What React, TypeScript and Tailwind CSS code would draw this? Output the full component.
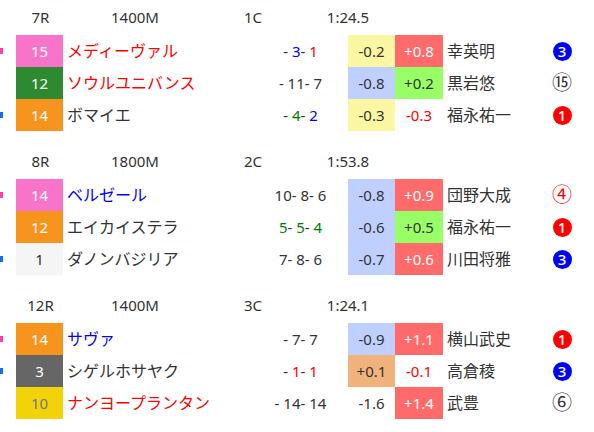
import React from "react";

type Pos = { v: string; c: string };
type Cell = { text: string; cls: string };
type Row = {
  mark?: string;
  num: string;
  numCls: string;
  name: string;
  nameCls: string;
  pos: Pos[];
  d1: Cell;
  d2: Cell;
  jockey: string;
  badge: { n: string; kind: "fill" | "ring"; cls: string };
};
type Race = { race: string; dist: string; cls: string; time: string; rows: Row[] };

const K = "text-[#333]";
const BLUE = "text-[#0000ff]";
const RED = "text-[#ff0000]";
const GREEN = "text-[#008000]";

const YEL = "bg-[#faf6a2] text-[#333]";
const LBLUE = "bg-[#bfcfff] text-[#333]";
const PLUS = "bg-[#ff6b6b] text-white";
const LGREEN = "bg-[#99ff66] text-[#333]";
const TAN = "bg-[#f0b27a] text-[#333]";
const NONE_R = "text-[#ff0000]";
const NONE_K = "text-[#333]";

const races: Race[] = [
  {
    race: "7R",
    dist: "1400M",
    cls: "1C",
    time: "1:24.5",
    rows: [
      {
        mark: "bg-[#ff3fa8]",
        num: "15",
        numCls: "bg-[#f874c9] text-white",
        name: "メディーヴァル",
        nameCls: RED,
        pos: [{ v: "", c: K }, { v: "3", c: BLUE }, { v: "1", c: RED }],
        d1: { text: "-0.2", cls: YEL },
        d2: { text: "+0.8", cls: PLUS },
        jockey: "幸英明",
        badge: { n: "3", kind: "fill", cls: "bg-[#0000ff]" },
      },
      {
        num: "12",
        numCls: "bg-[#2e8a30] text-white",
        name: "ソウルユニバンス",
        nameCls: RED,
        pos: [{ v: "", c: K }, { v: "11", c: K }, { v: "7", c: K }],
        d1: { text: "-0.8", cls: LBLUE },
        d2: { text: "+0.2", cls: LGREEN },
        jockey: "黒岩悠",
        badge: { n: "⑮", kind: "ring", cls: "text-[#333]" },
      },
      {
        mark: "bg-[#1a6bff]",
        num: "14",
        numCls: "bg-[#f7941e] text-white",
        name: "ボマイエ",
        nameCls: K,
        pos: [{ v: "", c: K }, { v: "4", c: GREEN }, { v: "2", c: BLUE }],
        d1: { text: "-0.3", cls: YEL },
        d2: { text: "-0.3", cls: NONE_R },
        jockey: "福永祐一",
        badge: { n: "1", kind: "fill", cls: "bg-[#ff0000]" },
      },
    ],
  },
  {
    race: "8R",
    dist: "1800M",
    cls: "2C",
    time: "1:53.8",
    rows: [
      {
        mark: "bg-[#ff3fa8]",
        num: "14",
        numCls: "bg-[#f874c9] text-white",
        name: "ベルゼール",
        nameCls: BLUE,
        pos: [{ v: "10", c: K }, { v: "8", c: K }, { v: "6", c: K }],
        d1: { text: "-0.8", cls: LBLUE },
        d2: { text: "+0.9", cls: PLUS },
        jockey: "団野大成",
        badge: { n: "④", kind: "ring", cls: "text-[#ff0000]" },
      },
      {
        num: "12",
        numCls: "bg-[#f7941e] text-white",
        name: "エイカイステラ",
        nameCls: K,
        pos: [{ v: "5", c: GREEN }, { v: "5", c: GREEN }, { v: "4", c: GREEN }],
        d1: { text: "-0.6", cls: LBLUE },
        d2: { text: "+0.5", cls: LGREEN },
        jockey: "福永祐一",
        badge: { n: "1", kind: "fill", cls: "bg-[#ff0000]" },
      },
      {
        mark: "bg-[#1a6bff]",
        num: "1",
        numCls: "bg-[#f5f5f5] text-[#333]",
        name: "ダノンバジリア",
        nameCls: K,
        pos: [{ v: "7", c: K }, { v: "8", c: K }, { v: "6", c: K }],
        d1: { text: "-0.7", cls: LBLUE },
        d2: { text: "+0.6", cls: PLUS },
        jockey: "川田将雅",
        badge: { n: "3", kind: "fill", cls: "bg-[#0000ff]" },
      },
    ],
  },
  {
    race: "12R",
    dist: "1400M",
    cls: "3C",
    time: "1:24.1",
    rows: [
      {
        mark: "bg-[#ff3fa8]",
        num: "14",
        numCls: "bg-[#f7941e] text-white",
        name: "サヴァ",
        nameCls: BLUE,
        pos: [{ v: "", c: K }, { v: "7", c: K }, { v: "7", c: K }],
        d1: { text: "-0.9", cls: LBLUE },
        d2: { text: "+1.1", cls: PLUS },
        jockey: "横山武史",
        badge: { n: "1", kind: "fill", cls: "bg-[#ff0000]" },
      },
      {
        mark: "bg-[#1a6bff]",
        num: "3",
        numCls: "bg-[#666666] text-white",
        name: "シゲルホサヤク",
        nameCls: K,
        pos: [{ v: "", c: K }, { v: "1", c: RED }, { v: "1", c: RED }],
        d1: { text: "+0.1", cls: TAN },
        d2: { text: "-0.1", cls: NONE_R },
        jockey: "高倉稜",
        badge: { n: "3", kind: "fill", cls: "bg-[#0000ff]" },
      },
      {
        num: "10",
        numCls: "bg-[#f2d30a] text-[#777]",
        name: "ナンヨープランタン",
        nameCls: RED,
        pos: [{ v: "", c: K }, { v: "14", c: K }, { v: "14", c: K }],
        d1: { text: "-1.6", cls: NONE_K },
        d2: { text: "+1.4", cls: PLUS },
        jockey: "武豊",
        badge: { n: "⑥", kind: "ring", cls: "text-[#333]" },
      },
    ],
  },
];

function Badge({ b }: { b: Row["badge"] }) {
  if (b.kind === "fill") {
    return (
      <div
        className={`flex h-[19px] w-[19px] items-center justify-center rounded-full text-[15px] font-medium leading-none text-white ${b.cls}`}
      >
        {b.n}
      </div>
    );
  }
  return <span className={`text-[20px] leading-none ${b.cls}`}>{b.n}</span>;
}

function RaceRow({ row }: { row: Row }) {
  return (
    <div className="flex h-[32px] items-stretch">
      {/* clipped marker */}
      <div className="flex w-[16px] items-center">
        {row.mark && <div className={`h-[6px] w-[3px] ${row.mark}`} />}
      </div>
      <div
        className={`flex w-[47px] items-center justify-center text-[15px] ${row.numCls}`}
      >
        {row.num}
      </div>
      <div className={`flex w-[190px] items-center pl-[4px] text-[16px] ${row.nameCls}`}>
        {row.name}
      </div>
      <div className="flex w-[95px] items-center justify-center whitespace-pre text-[15px] text-[#333]">
        <span className={row.pos[0].c}>{row.pos[0].v}</span>
        {"- "}
        <span className={row.pos[1].c}>{row.pos[1].v}</span>
        {"- "}
        <span className={row.pos[2].c}>{row.pos[2].v}</span>
      </div>
      <div className={`flex w-[47px] items-center justify-center text-[15px] ${row.d1.cls}`}>
        {row.d1.text}
      </div>
      <div className={`flex w-[48px] items-center justify-center text-[15px] ${row.d2.cls}`}>
        {row.d2.text}
      </div>
      <div className="flex w-[100px] items-center pl-[4px] text-[16px] text-[#333]">
        {row.jockey}
      </div>
      <div className="flex w-[38px] items-center justify-center">
        <Badge b={row.badge} />
      </div>
    </div>
  );
}

export default function App() {
  return (
    <div
      className="h-[432px] w-[594px] overflow-hidden bg-white text-[#333]"
      style={{ fontFamily: '"Noto Sans", "Noto Sans CJK JP", sans-serif' }}
    >
      {races.map((r) => (
        <div key={r.race} className="mb-[13px]">
          {/* Header */}
          <div className="flex h-[35px] items-center text-[15px]">
            <div className="w-[16px]" />
            <div className="w-[49px] text-center">{r.race}</div>
            <div className="w-[140px] text-center">{r.dist}</div>
            <div className="w-[96px] text-center">{r.cls}</div>
            <div className="w-[94px] text-center">{r.time}</div>
          </div>
          {r.rows.map((row, i) => (
            <RaceRow key={i} row={row} />
          ))}
        </div>
      ))}
    </div>
  );
}
